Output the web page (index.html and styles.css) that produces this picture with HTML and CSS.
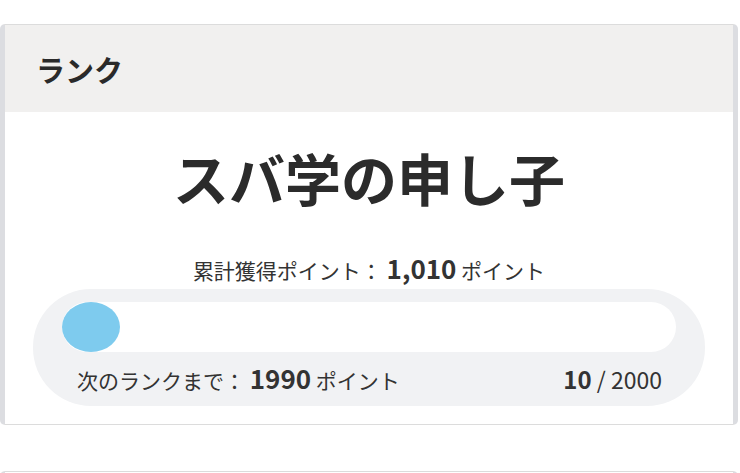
FILE: index.html
```html
<!DOCTYPE html>
<html lang="ja">
<head>
<meta charset="utf-8">
<link rel="stylesheet" href="styles.css">
</head>
<body>
<div class="page">
  <section class="card">
    <header class="card-head">ランク</header>
    <div class="card-body">
      <h1 class="rank-title">スバ学の申し子</h1>
      <p class="total">累計獲得ポイント： <b class="num">1,010</b> ポイント</p>
      <div class="progress-box">
        <div class="track"><div class="fill"></div></div>
        <div class="progress-row">
          <span>次のランクまで： <b class="num">1990</b> ポイント</span>
          <span class="count"><b class="num-s">10</b> / 2000</span>
        </div>
      </div>
    </div>
  </section>
  <section class="card next"></section>
</div>
</body>
</html>
```
FILE: styles.css
```css
html, body { margin: 0; padding: 0; background: #fff; }
body {
  font-family: "Noto Sans CJK JP", "Noto Sans", sans-serif;
  color: #333;
}
.page { padding: 24px 2px 0 0; }
.card {
  margin-left: 0;
  border: 1px solid #dcdcdc;
  border-left: 5px solid #dcdde1;
  border-right: 5px solid #dcdde1;
  border-radius: 5px;
  background: #fff;
  overflow: hidden;
}
.card-head {
  background: #f1f0ef;
  height: 87px;
  display: flex;
  align-items: center;
  padding-left: 31px;
  font-size: 29px;
  font-weight: 700;
  color: #2a2a2a;
}
.card-body {
  padding: 27px 28px 18px 28px;
  text-align: center;
}
.rank-title {
  margin: 0;
  font-size: 56px;
  line-height: 76px;
  font-weight: 700;
  color: #2b2b2b;
}
.total {
  margin: 38px 0 0;
  font-size: 21px;
  line-height: 30px;
}
.num { font-size: 26px; font-weight: 700; }
.num-s { font-size: 24px; font-weight: 700; }
.count { font-size: 23px; }
.progress-box {
  margin-top: 4px;
  background: #f1f2f4;
  border-radius: 58px;
  padding: 13px 29px 6px 29px;
}
.track {
  background: #fff;
  height: 50px;
  border-radius: 25px;
}
.fill {
  width: 58px;
  height: 50px;
  border-radius: 50%;
  background: #7ecbee;
}
.progress-row {
  display: flex;
  justify-content: space-between;
  align-items: baseline;
  padding: 8px 14px 2px 15px;
  font-size: 21px;
  line-height: 36px;
}
.next {
  margin-top: 46px;
  height: 20px;
  border-bottom: none;
}
```
